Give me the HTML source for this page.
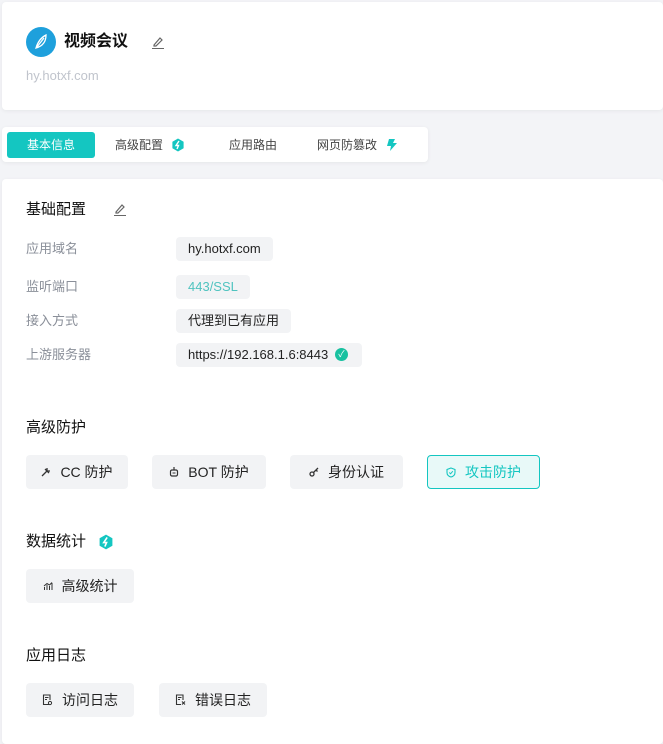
<!DOCTYPE html>
<html><head><meta charset="utf-8"><style>
*{margin:0;padding:0;box-sizing:border-box}
body{width:663px;height:740px;background:#f3f4f7;font-family:"Liberation Sans","Noto Sans CJK SC",sans-serif;position:relative;overflow:hidden;color:#222}
.a{position:absolute}
.card{position:absolute;background:#fff;border-radius:4px;box-shadow:0 1px 4px rgba(0,0,0,.06)}
.lbl{position:absolute;left:26px;font-size:13px;color:#8a8f99;line-height:16px}
.pill{position:absolute;left:176px;height:24px;background:#f2f3f5;border-radius:4px;font-size:13px;line-height:24px;padding:0 12px;color:#222}
.h{position:absolute;left:26px;font-size:15px;color:#111;line-height:18px}
.btn{position:absolute;height:34px;background:#f2f3f5;border-radius:4px;font-size:14px;line-height:34px;color:#222;display:flex;align-items:center;justify-content:center;gap:9px}
.tab{position:absolute;top:132px;height:26px;line-height:26px;font-size:12px;color:#444}
</style></head><body>
<div class="card" style="left:2px;top:2px;width:661px;height:108px"></div>
<div class="a" style="left:26px;top:27px;width:30px;height:30px;border-radius:50%;background:#1ea0dc"></div>
<svg class="a" style="left:30px;top:31px" width="22" height="22" viewBox="0 0 22 22"><path d="M6 17C8 10 12 6 16 4C16 10 13 15 6 17Z M7 16L14 7" fill="none" stroke="#fff" stroke-width="1.3"/></svg>
<div class="a" style="left:64px;top:32px;font-size:16px;font-weight:bold;color:#111;line-height:20px">视频会议</div>
<svg class="a" style="left:150px;top:34px" width="16" height="16" viewBox="0 0 16 16"><path d="M4 11L10 4L12 6L6 12H4Z" fill="none" stroke="#666" stroke-width="1.2"/><path d="M2 14.5H14" stroke="#666" stroke-width="1"/></svg>
<div class="a" style="left:26px;top:68px;font-size:13px;color:#c0c4cc">hy.hotxf.com</div>

<div class="card" style="left:2px;top:127px;width:426px;height:35px"></div>
<div class="a" style="left:7px;top:132px;width:88px;height:26px;background:#14c6c1;border-radius:3px;color:#fff;font-size:12px;line-height:26px;text-align:center">基本信息</div>
<div class="tab" style="left:115px">高级配置</div>
<svg class="a" style="left:171px;top:138px" width="14" height="14" viewBox="0 0 14 14"><path d="M7 0.5L12.6 3.7V10.3L7 13.5L1.4 10.3V3.7Z" fill="#14c6c1"/><path d="M8 3L5 7.5H7.5L6 11" fill="none" stroke="#fff" stroke-width="1.4"/></svg>
<div class="tab" style="left:229px">应用路由</div>
<div class="tab" style="left:317px">网页防篡改</div>
<svg class="a" style="left:386px;top:138px" width="12" height="14" viewBox="0 0 12 14"><path d="M3 1L1 8L5 8L4 13L11 5L7 5L9 1Z" fill="#14c6c1"/></svg>

<div class="card" style="left:2px;top:179px;width:661px;height:565px"></div>
<div class="h" style="top:201px">基础配置</div>
<svg class="a" style="left:112px;top:201px" width="16" height="16" viewBox="0 0 16 16"><path d="M4 11L10 4L12 6L6 12H4Z" fill="none" stroke="#666" stroke-width="1.2"/><path d="M2 14.5H14" stroke="#666" stroke-width="1"/></svg>
<div class="lbl" style="top:241px">应用域名</div><div class="pill" style="top:237px">hy.hotxf.com</div>
<div class="lbl" style="top:279px">监听端口</div><div class="pill" style="top:275px;color:#4fc3bf">443/SSL</div>
<div class="lbl" style="top:313px">接入方式</div><div class="pill" style="top:309px">代理到已有应用</div>
<div class="lbl" style="top:347px">上游服务器</div><div class="pill" style="top:343px;width:186px">https://192.168.1.6:8443<span style="position:absolute;right:14px;top:5px;width:13px;height:13px;border-radius:50%;background:#19c1a0;color:#fff;font-size:9px;line-height:13px;text-align:center">✓</span></div>

<div class="h" style="top:419px">高级防护</div>
<div class="btn" style="left:26px;top:455px;width:102px"><svg width="10" height="10" viewBox="0 0 10 10"><path d="M1 9L6 4M4 2L8 6M6 1L6 4L9 4" fill="none" stroke="#333" stroke-width="1.3"/></svg>CC 防护</div>
<div class="btn" style="left:152px;top:455px;width:114px"><svg width="10" height="12" viewBox="0 0 10 12"><rect x="1.5" y="4" width="7" height="6" rx="1.5" fill="none" stroke="#333" stroke-width="1.2"/><path d="M5 1V4" stroke="#333" stroke-width="1.2"/><path d="M3.5 7H6.5" stroke="#333"/></svg>BOT 防护</div>
<div class="btn" style="left:290px;top:455px;width:113px"><svg width="10" height="10" viewBox="0 0 10 10"><circle cx="3" cy="7" r="2" fill="none" stroke="#333" stroke-width="1.3"/><path d="M4.5 5.5L9 1M7 3L8.5 4.5" stroke="#333" stroke-width="1.3"/></svg>身份认证</div>
<div class="btn" style="left:427px;top:455px;width:113px;background:#e8f9f8;border:1px solid #14c6c1;color:#14c6c1"><svg width="10" height="11" viewBox="0 0 10 11"><path d="M5 1L9 2.5V5.5C9 8 7 9.5 5 10C3 9.5 1 8 1 5.5V2.5Z" fill="none" stroke="#14c6c1" stroke-width="1.1"/><path d="M3.3 5.5L4.6 6.8L6.8 4.2" fill="none" stroke="#14c6c1"/></svg>攻击防护</div>

<div class="h" style="top:533px">数据统计</div>
<svg class="a" style="left:98px;top:534px" width="16" height="16" viewBox="0 0 14 14"><path d="M7 0.5L12.6 3.7V10.3L7 13.5L1.4 10.3V3.7Z" fill="#14c6c1"/><path d="M8 3L5 7.5H7.5L6 11" fill="none" stroke="#fff" stroke-width="1.4"/></svg>
<div class="btn" style="left:26px;top:569px;width:108px"><svg width="10" height="10" viewBox="0 0 10 10"><path d="M1.5 9V6M4 9V4M6.5 9V5M9 9V2M1 5L4 2.5L6.5 4L9 1.5" fill="none" stroke="#333" stroke-width="1"/></svg>高级统计</div>

<div class="h" style="top:647px">应用日志</div>
<div class="btn" style="left:26px;top:683px;width:108px"><svg width="11" height="12" viewBox="0 0 11 12"><path d="M7 10.5H1.5V1H8V6" fill="none" stroke="#333" stroke-width="1.1"/><path d="M3 3.5H6.5M3 5.5H5" stroke="#333"/><circle cx="8" cy="9" r="1.6" fill="none" stroke="#333"/></svg>访问日志</div>
<div class="btn" style="left:159px;top:683px;width:108px"><svg width="11" height="12" viewBox="0 0 11 12"><path d="M6 10.5H1.5V1H8V6" fill="none" stroke="#333" stroke-width="1.1"/><path d="M3 3.5H6.5M3 5.5H5" stroke="#333"/><path d="M7 7.5L10 10.5M10 7.5L7 10.5" stroke="#333" stroke-width="1.1"/></svg>错误日志</div>
</body></html>
